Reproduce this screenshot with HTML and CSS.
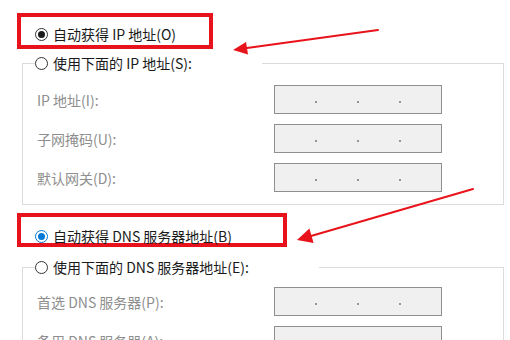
FILE: index.html
```html
<!DOCTYPE html>
<html lang="zh-CN">
<head>
  <meta charset="UTF-8">
  <meta name="viewport" content="width=device-width, initial-scale=1.0">
  <title>IP 设置</title>
  <link rel="stylesheet" href="styles.css">
</head>
<body>
  <div class="page">
    <div class="pick pick-ip">
      <label class="opt"><span class="radio on"></span>自动获得 IP 地址(O)</label>
    </div>

    <fieldset class="group group-ip">
      <legend><label class="opt"><span class="radio"></span>使用下面的 IP 地址(S):</label></legend>
      <div class="row"><span class="name">IP 地址(I):</span><div class="ip"><i></i><i></i><i></i></div></div>
      <div class="row"><span class="name">子网掩码(U):</span><div class="ip"><i></i><i></i><i></i></div></div>
      <div class="row"><span class="name">默认网关(D):</span><div class="ip"><i></i><i></i><i></i></div></div>
    </fieldset>

    <div class="pick pick-dns">
      <label class="opt"><span class="radio on blue"></span>自动获得 DNS 服务器地址(B)</label>
    </div>

    <fieldset class="group group-dns">
      <legend><label class="opt"><span class="radio"></span>使用下面的 DNS 服务器地址(E):</label></legend>
      <div class="row"><span class="name">首选 DNS 服务器(P):</span><div class="ip"><i></i><i></i><i></i></div></div>
      <div class="row"><span class="name">备用 DNS 服务器(A):</span><div class="ip"><i></i><i></i><i></i></div></div>
    </fieldset>

    <!-- annotation arrows drawn over the dialog -->
    <svg class="arrows" width="510" height="340" viewBox="0 0 510 340">
      <line x1="378" y1="17" x2="247" y2="35" stroke="#e8141b" stroke-width="2" stroke-linecap="round"/>
      <polygon points="233,37 248,41.5 246,29" fill="#e8141b"/>
      <line x1="473" y1="176" x2="311" y2="223" stroke="#e8141b" stroke-width="2" stroke-linecap="round"/>
      <polygon points="297,227 313.6,230 309.4,215.5" fill="#e8141b"/>
    </svg>
  </div>
</body>
</html>
```

FILE: styles.css
```css
body {
  margin: 0;
  background-color: #fff;
  font-family: "Noto Sans CJK SC", "Noto Sans", sans-serif;
  font-size: 14px;
  color: #1a1a1a;
  overflow: hidden;
}
.page {
  position: relative;
  height: 340px;
}
.opt {
  display: flex;
  align-items: center;
  height: 14px;
  line-height: 14px;
  white-space: nowrap;
}
.radio {
  box-sizing: border-box;
  width: 13px;
  height: 13px;
  margin-right: 5px;
  border: 1px solid #333;
  border-radius: 50%;
  background-color: #fff;
  display: flex;
  align-items: center;
  justify-content: center;
  flex: none;
}
.radio.on::after {
  content: "";
  width: 7px;
  height: 7px;
  border-radius: 50%;
  background-color: #1a1a1a;
}
.radio.blue {
  border-color: #0078d7;
}
.radio.blue::after {
  background-color: #0078d7;
}

.pick {
  box-sizing: border-box;
  margin-left: 17px;
  border: 4px solid #e8121c;
  padding: 10px 0 4px 14px;
}
.pick-ip {
  width: 196px;
  margin-top: 13px;
}
.pick-dns {
  width: 270px;
  margin-top: 8px;
  padding: 12px 0 0 14px;
}

.group {
  box-sizing: border-box;
  width: 482px;
  margin: 4px 0 0 22px;
  border: 1px solid #dcdcdc;
  padding: 12px 0 12px 12px;
  display: flex;
  flex-direction: column;
  gap: 10px;
}
.group legend {
  padding: 3px 70px 3px 0;
}
.group-dns {
  margin-top: 10px;
  padding-top: 10px;
}
.row {
  display: grid;
  grid-template-columns: 237px 168px;
  align-items: center;
  padding-left: 2px;
}
.name {
  color: #8e8e8e;
  white-space: nowrap;
}
.ip {
  box-sizing: border-box;
  height: 29px;
  border: 1px solid #8f8f8f;
  background-color: #f0f0f0;
  display: flex;
  align-items: center;
  justify-content: space-evenly;
  padding-top: 5px;
}
.ip i {
  width: 2px;
  height: 2px;
  border-radius: 50%;
  background-color: #777;
}

.arrows {
  position: absolute;
  left: 0;
  top: 0;
  pointer-events: none;
}
```
